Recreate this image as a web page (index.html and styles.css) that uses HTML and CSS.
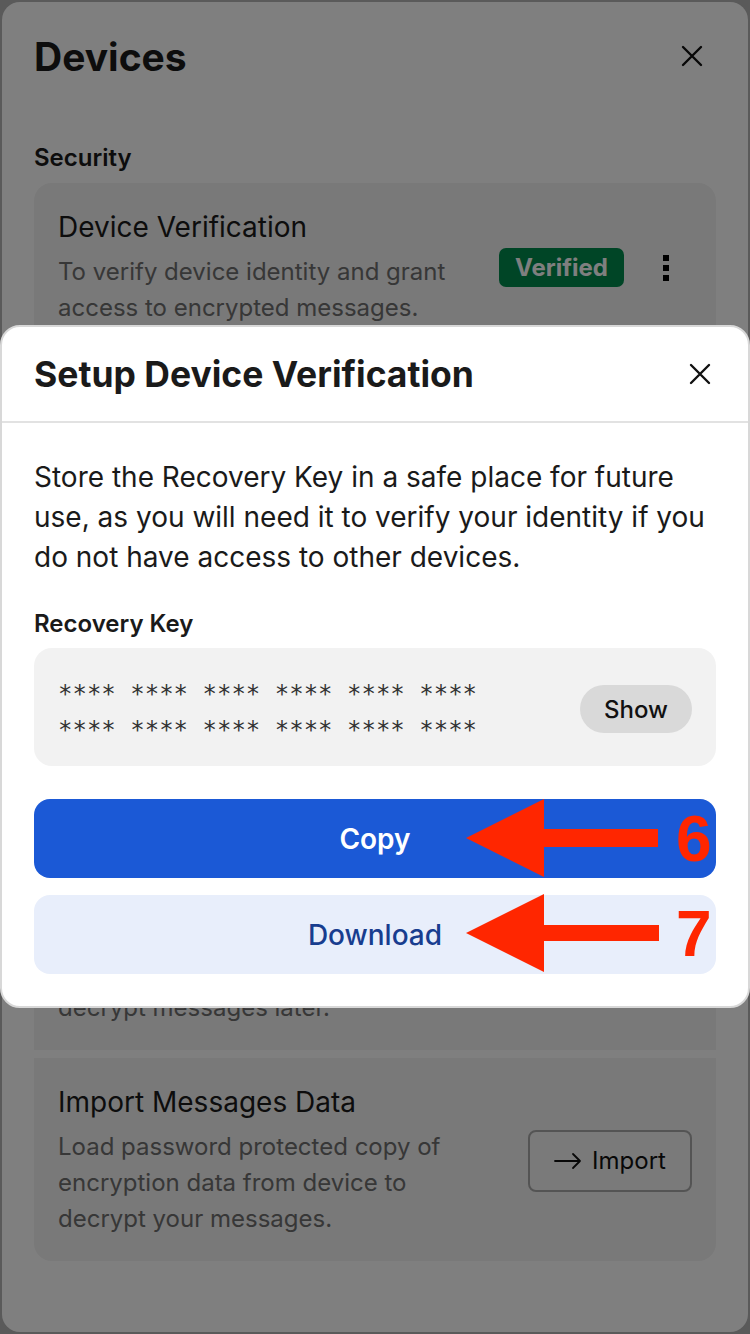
FILE: index.html
```html
<!DOCTYPE html>
<html lang="en">
<head>
    <meta charset="UTF-8">
    <meta name="viewport" content="width=device-width, initial-scale=1.0">
    <title>Devices</title>
    <link rel="stylesheet" href="styles.css">
</head>
<body>
    <div class="sheet">
        <div class="sheet-header">
            <h1>Devices</h1>
            <button class="icon-btn" aria-label="Close">
                <svg width="24" height="24" viewBox="0 0 24 24"><path d="M3 3L21 21M21 3L3 21" stroke="currentColor" stroke-width="2.4" fill="none" stroke-linecap="round"/></svg>
            </button>
        </div>
        <div class="section-label">Security</div>
        <div class="tiles">
            <div class="tile">
                <div class="tile-text">
                    <div class="tile-title">Device Verification</div>
                    <div class="tile-desc">To verify device identity and grant access to encrypted messages.</div>
                </div>
                <div class="tile-actions">
                    <span class="badge">Verified</span>
                    <button class="icon-btn kebab" aria-label="Options">
                        <svg width="6" height="26" viewBox="0 0 6 26"><rect x="0" y="0" width="6" height="6"/><rect x="0" y="10" width="6" height="6"/><rect x="0" y="20" width="6" height="6"/></svg>
                    </button>
                </div>
            </div>
            <div class="tile">
                <div class="tile-text">
                    <div class="tile-title">Verify Other Devices</div>
                    <div class="tile-desc">Confirm the sessions you signed in from<br>to share message keys safely.</div>
                </div>
            </div>
            <div class="tile">
                <div class="tile-text">
                    <div class="tile-title">Cross Signing</div>
                    <div class="tile-desc">Keys used to trust your own sessions<br>and the sessions of other users.</div>
                </div>
            </div>
            <div class="tile">
                <div class="tile-text">
                    <div class="tile-title">Key Backup</div>
                    <div class="tile-desc">Stored on the server.</div>
                </div>
            </div>
            <div class="tile">
                <div class="tile-text">
                    <div class="tile-title">Export Messages Data</div>
                    <div class="tile-desc">Save password protected copy of encryption data on your device to decrypt messages later.</div>
                </div>
                <div class="tile-actions">
                    <button class="outline-btn">
                        <svg width="28" height="24" viewBox="0 0 28 24"><path d="M1 12H26M19 5L26 12L19 19" stroke="currentColor" stroke-width="1.8" fill="none" stroke-linecap="round" stroke-linejoin="round"/></svg>
                        Export
                    </button>
                </div>
            </div>
            <div class="tile">
                <div class="tile-text">
                    <div class="tile-title">Import Messages Data</div>
                    <div class="tile-desc">Load password protected copy of encryption data from device to decrypt your messages.</div>
                </div>
                <div class="tile-actions">
                    <button class="outline-btn">
                        <svg width="28" height="24" viewBox="0 0 28 24"><path d="M1 12H26M19 5L26 12L19 19" stroke="currentColor" stroke-width="1.8" fill="none" stroke-linecap="round" stroke-linejoin="round"/></svg>
                        Import
                    </button>
                </div>
            </div>
        </div>
    </div>

    <div class="backdrop"></div>

    <div class="dialog">
        <div class="dialog-header">
            <h2>Setup Device Verification</h2>
            <button class="icon-btn" aria-label="Close">
                <svg width="24" height="24" viewBox="0 0 24 24"><path d="M3 3L21 21M21 3L3 21" stroke="currentColor" stroke-width="2.4" fill="none" stroke-linecap="round"/></svg>
            </button>
        </div>
        <div class="dialog-body">
            <p class="intro">Store the Recovery Key in a safe place for future use, as you will need it to verify your identity if you do not have access to other devices.</p>
            <div class="field-label">Recovery Key</div>
            <div class="key-box">
                <div class="key-text">**** **** **** **** **** ****<br>**** **** **** **** **** ****</div>
                <button class="pill-btn">Show</button>
            </div>
            <button class="btn btn-primary">Copy</button>
            <button class="btn btn-soft">Download</button>
        </div>
    </div>

    <svg class="annotations" width="750" height="1334" viewBox="0 0 750 1334">
        <polygon points="466,838 544,799 544,829 658,829 658,847 544,847 544,877" fill="#ff2600"/>
        <polygon points="466,933 544,894 544,925 659,925 659,941 544,941 544,972" fill="#ff2600"/>
        <text x="676" y="861" class="note-num">6</text>
        <text x="676" y="956" class="note-num">7</text>
    </svg>
</body>
</html>
```

FILE: styles.css
```css
* {
    box-sizing: border-box;
}
body {
    margin: 0;
    background-color: #b4b4b4;
    font-family: Inter, "Noto Sans", sans-serif;
    color: #1a1a1a;
    min-height: 1334px;
    position: relative;
}
button {
    font-family: inherit;
    border: none;
    background: none;
    cursor: pointer;
    padding: 0;
}
.sheet {
    margin: 2px;
    min-height: 1330px;
    background-color: #fff;
    border-radius: 18px;
    padding: 0 32px;
}
.sheet-header {
    height: 108px;
    display: flex;
    align-items: center;
    justify-content: space-between;
}
.sheet-header h1 {
    margin: 0;
    font-size: 39px;
    font-weight: 700;
}
.icon-btn {
    width: 48px;
    height: 48px;
    display: flex;
    align-items: center;
    justify-content: center;
    color: #111;
}
.section-label {
    margin-top: 34px;
    font-size: 24px;
    font-weight: 600;
    line-height: 28px;
}
.tiles {
    margin-top: 11px;
    display: flex;
    flex-direction: column;
    gap: 8px;
}
.tile {
    background-color: #f2f2f2;
    padding: 26px 24px 24px;
    display: flex;
    align-items: center;
    gap: 40px;
}
.tile:first-child {
    border-radius: 18px 18px 0 0;
}
.tile:last-child {
    border-radius: 0 0 18px 18px;
}
.tile-text {
    flex: 1;
}
.tile-title {
    font-size: 28px;
    line-height: 36px;
}
.tile-desc {
    margin-top: 9px;
    font-size: 24px;
    line-height: 36px;
    color: #6e6e6e;
}
.tile-actions {
    display: flex;
    align-items: center;
    gap: 24px;
}
.badge {
    background-color: #008a4c;
    color: #fff;
    font-size: 24px;
    font-weight: 700;
    line-height: 39px;
    padding: 0 16px;
    border-radius: 7px;
}
.kebab {
    width: 36px;
    margin-right: 8px;
    color: #000;
}
.kebab svg {
    fill: currentColor;
}
.outline-btn {
    width: 164px;
    height: 62px;
    border: 2px solid #a9a9a9;
    border-radius: 8px;
    background-color: #f4f4f4;
    display: flex;
    align-items: center;
    justify-content: center;
    gap: 10px;
    font-size: 24px;
    color: #111;
}
.backdrop {
    position: absolute;
    inset: 0;
    background-color: rgba(0, 0, 0, 0.5);
}
.dialog {
    position: absolute;
    top: 325px;
    left: 0;
    width: 750px;
    background-color: #fff;
    border: 2px solid #d8d8d8;
    border-radius: 20px;
}
.dialog-header {
    height: 96px;
    padding: 0 24px 0 32px;
    display: flex;
    align-items: center;
    justify-content: space-between;
    border-bottom: 2px solid #e2e2e2;
}
.dialog-header h2 {
    margin: 0;
    font-size: 35.5px;
    font-weight: 700;
}
.dialog-body {
    padding: 34px 32px 32px;
    display: flex;
    flex-direction: column;
}
.intro {
    margin: 0;
    font-size: 28px;
    line-height: 40px;
}
.field-label {
    margin-top: 33px;
    font-size: 24px;
    font-weight: 600;
    line-height: 28px;
}
.key-box {
    margin-top: 10px;
    background-color: #f2f2f2;
    border-radius: 18px;
    padding: 22px 24px 18px;
    display: flex;
    align-items: center;
    justify-content: space-between;
}
.key-text {
    padding-top: 6px;
    font-family: "DejaVu Sans Mono", "Liberation Mono", monospace;
    font-size: 24px;
    line-height: 36px;
    color: #333;
    white-space: pre;
}
.pill-btn {
    width: 112px;
    height: 48px;
    border-radius: 24px;
    background-color: #d9d9d9;
    font-size: 24px;
    font-weight: 500;
    color: #111;
}
.btn {
    height: 79px;
    border-radius: 16px;
    font-size: 28px;
    font-weight: 500;
}
.btn-primary {
    margin-top: 33px;
    background-color: #1b59d6;
    color: #fff;
    font-weight: 600;
}
.btn-soft {
    margin-top: 17px;
    background-color: #e8eefb;
    color: #183d8f;
}
.annotations {
    position: absolute;
    top: 0;
    left: 0;
    pointer-events: none;
}
.note-num {
    font-family: "Liberation Sans", Arial, sans-serif;
    font-weight: 700;
    font-size: 64px;
    fill: #ff2600;
}
```
